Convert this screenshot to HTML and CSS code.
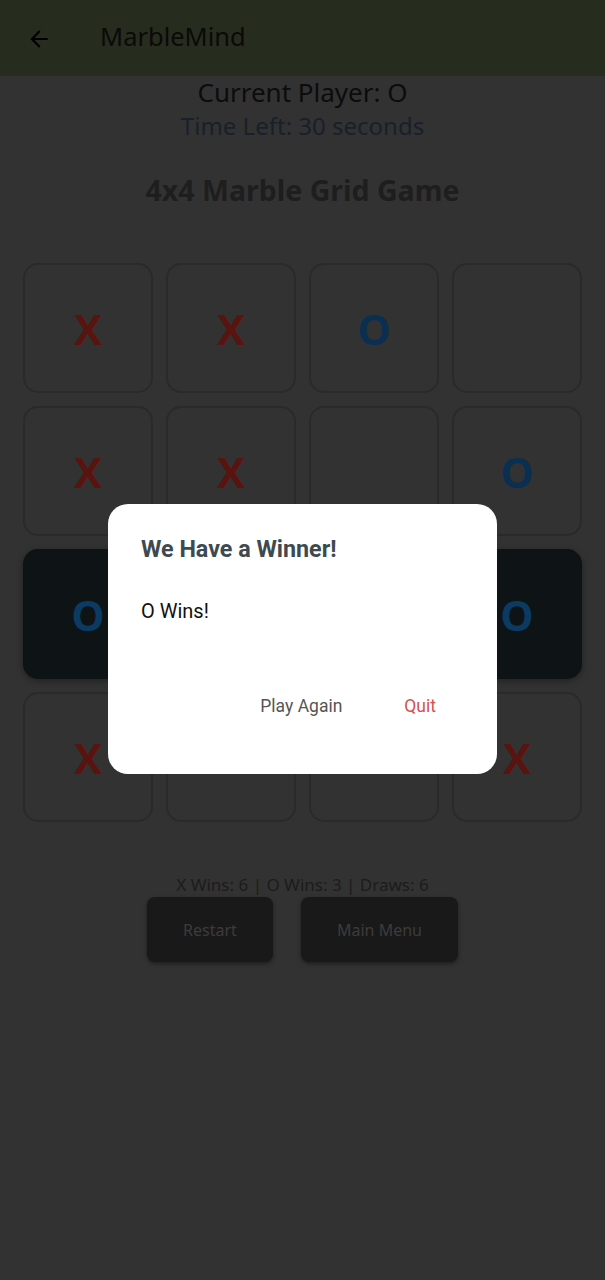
FILE: index.html
```html
<!DOCTYPE html>
<html>
<head>
<meta charset="utf-8">
<link rel="stylesheet" href="styles.css">
</head>
<body>
<div class="app">
  <header class="appbar">
    <svg class="back" width="26" height="26" viewBox="0 0 24 24"><path d="M20 11H7.83l5.59-5.59L12 4l-8 8 8 8 1.41-1.41L7.83 13H20v-2z" fill="#000"/></svg>
    <div class="title">MarbleMind</div>
  </header>
  <main class="content">
    <div class="player">Current Player: O</div>
    <div class="timer">Time Left: 30 seconds</div>
    <h1 class="heading">4x4 Marble Grid Game</h1>
    <div class="grid">
      <div class="cell x">X</div><div class="cell x">X</div><div class="cell o">O</div><div class="cell"></div>
      <div class="cell x">X</div><div class="cell x">X</div><div class="cell"></div><div class="cell o">O</div>
      <div class="cell win o">O</div><div class="cell win o">O</div><div class="cell win o">O</div><div class="cell win o">O</div>
      <div class="cell x">X</div><div class="cell"></div><div class="cell"></div><div class="cell x">X</div>
    </div>
    <div class="stats">X Wins: 6 | O Wins: 3 | Draws: 6</div>
    <div class="actions">
      <button class="btn restart">Restart</button>
      <button class="btn menu">Main Menu</button>
    </div>
  </main>
  <div class="dialog">
    <div class="d-title">We Have a Winner!</div>
    <div class="d-body">O Wins!</div>
    <div class="d-actions">
      <span class="d-btn again">Play Again</span>
      <span class="d-btn quit">Quit</span>
    </div>
  </div>
</div>
</body>
</html>
```

FILE: styles.css
```css
* { box-sizing: border-box; }
html, body { margin: 0; padding: 0; }
body {
  width: 605px;
  height: 1280px;
  background: #323232;
  font-family: "Noto Sans", "Open Sans", sans-serif;
  overflow: hidden;
}
.app { position: relative; width: 605px; height: 1280px; }
.appbar {
  height: 76px;
  background: #262d1e;
  display: flex;
  align-items: center;
  padding-left: 26px;
}
.back { display: block; margin-top: 1px; }
.title {
  margin-left: 48px;
  margin-top: -4px;
  font-size: 25.5px;
  color: #0a0a0a;
}
.content {
  display: flex;
  flex-direction: column;
  align-items: center;
}
.player {
  margin-top: 0;
  font-size: 26px;
  line-height: 32px;
  color: #0c0c0c;
}
.timer {
  font-size: 24px;
  line-height: 36px;
  color: #18202a;
}
.heading {
  margin: 26px 0 0;
  font-size: 28.5px;
  line-height: 40px;
  font-weight: bold;
  color: #1e1e1e;
}
.grid {
  margin-top: 53px;
  display: grid;
  grid-template-columns: repeat(4, 130px);
  grid-auto-rows: 130px;
  gap: 13px;
}
.cell {
  border: 2px solid #2a2a2a;
  border-radius: 15px;
  display: flex;
  align-items: center;
  justify-content: center;
  font-family: "Open Sans", sans-serif;
  font-weight: bold;
  font-size: 42px;
}
.cell.x { color: #5a1410; }
.cell.o { color: #0b2f50; }
.cell.win {
  background: #0e1316;
  border-color: #0e1316;
  box-shadow: 0 2px 6px rgba(0,0,0,0.35);
}
.cell.win.o { color: #0b3a62; }
.stats {
  margin-top: 53px;
  font-size: 17px;
  line-height: 20px;
  color: #1c1c1c;
}
.actions {
  display: flex;
  gap: 28px;
  margin-top: 2px;
}
.btn {
  height: 65px;
  border: none;
  border-radius: 8px;
  background: #191919;
  color: #3c3c3c;
  font-family: "Noto Sans", sans-serif;
  font-size: 16px;
  box-shadow: 0 2px 4px rgba(0,0,0,0.4);
}
.restart { width: 126px; }
.menu { width: 157px; }
.dialog {
  position: absolute;
  left: 108px;
  top: 504px;
  width: 389px;
  height: 270px;
  background: #fff;
  border-radius: 20px;
  padding: 31px 33px 0;
  font-family: Roboto, "Noto Sans", sans-serif;
}
.d-title {
  font-size: 23.3px;
  line-height: 28px;
  font-weight: bold;
  color: #3d4a50;
}
.d-body {
  margin-top: 36px;
  font-size: 20px;
  line-height: 24px;
  color: #111;
}
.d-actions {
  margin-top: 73px;
  display: flex;
  justify-content: flex-end;
  gap: 62px;
  padding-right: 28px;
}
.d-btn {
  font-size: 17.5px;
  line-height: 20px;
}
.again { color: #555; }
.quit { color: #d5524c; }
```
